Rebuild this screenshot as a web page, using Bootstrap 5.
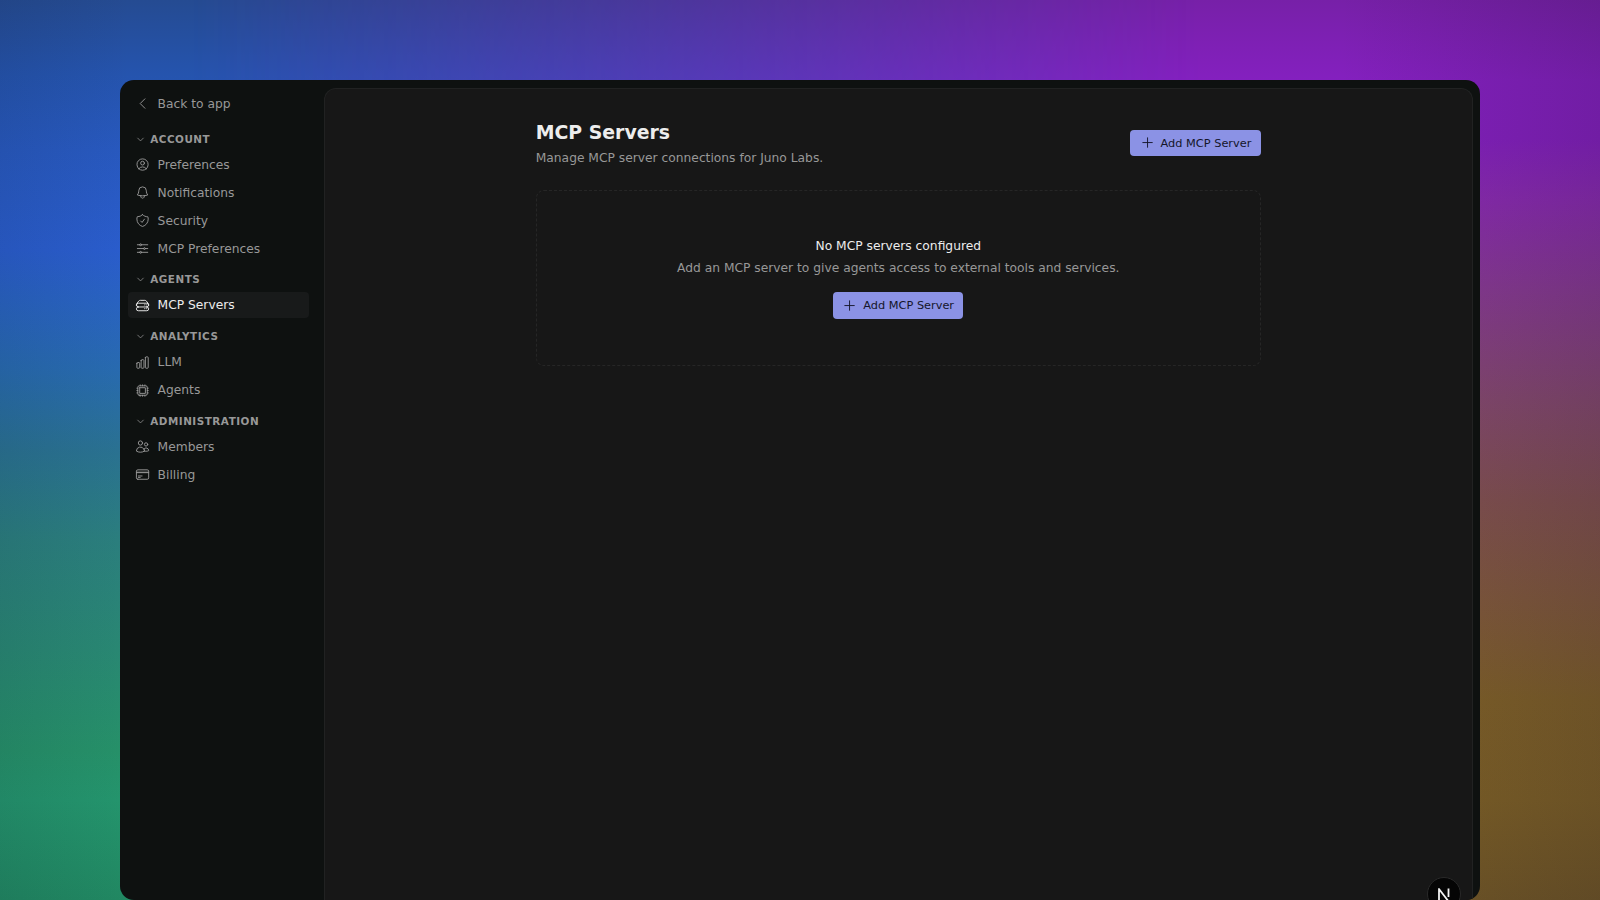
<!DOCTYPE html>
<html lang="en" data-bs-theme="dark">
<head>
<meta charset="utf-8">
<title>MCP Servers</title>
<meta name="viewport" content="width=device-width, initial-scale=1">
<link href="https://cdn.jsdelivr.net/npm/bootstrap@5.3.0/dist/css/bootstrap.min.css" rel="stylesheet">
<style>
  body { font-family: "DejaVu Sans", sans-serif; font-size: 12.28px; line-height: 20px; color: #989898; }
  .desktop {
    height: 900px; padding: 80px 120px 0; z-index: 0;
    background: linear-gradient(180deg, #254b92 0, #2554ae 75px, #2859bf 150px, #2a5dcd 250px, #2963c2 300px, #286bb0 370px, #2a7292 450px, #2b7f7e 540px, #298873 650px, #269169 750px, #24956d 800px, #218862 900px);
  }
  .desktop::before {
    content: ""; position: absolute; inset: 0; z-index: -1;
    background: linear-gradient(180deg, #7720a8 0, #8420bf 80px, #8420be 140px, #8a2bb0 200px, #883a92 290px, #85496e 400px, #825150 500px, #81593c 600px, #7f6028 700px, #7c5f26 800px, #705626 900px);
    -webkit-mask-image: linear-gradient(90deg, transparent 12%, #000 75%); mask-image: linear-gradient(90deg, transparent 12%, #000 75%);
  }
  .desktop::after {
    content: ""; position: absolute; inset: 0; z-index: -1;
    background:
      linear-gradient(90deg, rgba(10,20,40,.1), transparent 130px),
      linear-gradient(270deg, rgba(20,15,35,.17), transparent 260px);
  }
  .app-window { height: 820px; background: #0e1110; border-radius: 14px; padding: 7.5px 7.5px 0 0; }
  .side { width: 204px; padding: 3px 15px 0 7.5px; }
  .side a { display: flex; align-items: center; gap: 7.5px; height: 26px; padding: 0 7.5px; margin-bottom: 2px; border-radius: 4px; color: #989898; text-decoration: none; }
  .side a.active { background: #181a1a; color: #ededed; }
  .side h2 { display: flex; align-items: center; gap: 5px; height: 21px; margin: 7.8px 0 2px; padding-left: 8.7px; font-size: 10.4px; font-weight: 700; letter-spacing: .52px; line-height: 21px; color: #989898; }
  .side .back + h2 { margin-top: 12px; }
  svg { flex: none; width: 15.1px; height: 15.1px; fill: none; stroke: currentColor; stroke-width: 1.5; stroke-linecap: round; stroke-linejoin: round; }
  .side h2 svg { width: 9px; height: 9px; stroke-width: 2; }
  .panel { background: #171717; border: 1px solid #212222; border-bottom: 0; border-radius: 12px 12px 0 0; }
  .content-col { width: 725px; padding-top: 30px; }
  h1 { font-size: 18.88px; line-height: 26px; font-weight: 700; color: #ededed; margin: 0 0 3px; }
  .btn-add { --bs-btn-bg: #8b92e5; --bs-btn-color: #15162a; --bs-btn-hover-bg: #9aa0ee; --bs-btn-border-width: 0; --bs-btn-border-radius: 4px; --bs-btn-font-size: 11.33px; --bs-btn-padding-x: 9.4px; --bs-btn-padding-y: 0; height: 26.5px; gap: 5.7px; line-height: 18px; }
  .empty { height: 176px; margin-top: 22px; border: 1px dashed #262626; border-radius: 8px; padding-top: 45.5px; }
  .empty strong { font-weight: 400; color: #ededed; }
  .empty p { margin: 2px 0 14px; }
  .dev-badge { right: 19.5px; bottom: -11px; width: 34px; height: 34px; background: #050505; border: 1px solid #292929; }
  .dev-badge svg { width: 16px; height: 16px; stroke: #f2f2f2; stroke-width: 1.8; stroke-linecap: butt; }
</style>
</head>
<body>
<div class="desktop position-relative overflow-hidden">
  <div class="app-window d-flex position-relative overflow-hidden">
    <nav class="side flex-shrink-0">
      <a href="#" class="back"><svg viewBox="0 0 24 24"><path d="M15.75 19.5 8.25 12l7.5-7.5"/></svg>Back to app</a>
      <h2><svg viewBox="0 0 24 24"><path d="m19.5 8.25-7.5 7.5-7.5-7.5"/></svg>ACCOUNT</h2>
      <a href="#"><svg viewBox="0 0 24 24"><path d="M17.982 18.725A7.488 7.488 0 0 0 12 15.75a7.488 7.488 0 0 0-5.982 2.975m11.963 0a9 9 0 1 0-11.963 0m11.963 0A8.966 8.966 0 0 1 12 21a8.966 8.966 0 0 1-5.982-2.275M15 9.75a3 3 0 1 1-6 0 3 3 0 0 1 6 0Z"/></svg>Preferences</a>
      <a href="#"><svg viewBox="0 0 24 24"><path d="M14.857 17.082a23.848 23.848 0 0 0 5.454-1.31A8.967 8.967 0 0 1 18 9.75V9A6 6 0 0 0 6 9v.75a8.967 8.967 0 0 1-2.312 6.022c1.733.64 3.56 1.085 5.455 1.31m5.714 0a24.255 24.255 0 0 1-5.714 0m5.714 0a3 3 0 1 1-5.714 0"/></svg>Notifications</a>
      <a href="#"><svg viewBox="0 0 24 24"><path d="M9 12.75 11.25 15 15 9.75m-3-7.036A11.959 11.959 0 0 1 3.598 6 11.99 11.99 0 0 0 3 9.749c0 5.592 3.824 10.29 9 11.623 5.176-1.332 9-6.03 9-11.622 0-1.31-.21-2.571-.598-3.751h-.152c-3.196 0-6.1-1.248-8.25-3.285Z"/></svg>Security</a>
      <a href="#"><svg viewBox="0 0 24 24"><path d="M10.5 6h9.75M10.5 6a1.5 1.5 0 1 1-3 0m3 0a1.5 1.5 0 1 0-3 0M3.75 6H7.5m3 12h9.75m-9.75 0a1.5 1.5 0 0 1-3 0m3 0a1.5 1.5 0 0 0-3 0m-3.75 0H7.5m9-6h3.75m-3.75 0a1.5 1.5 0 0 1-3 0m3 0a1.5 1.5 0 0 0-3 0m-9.75 0h9.75"/></svg>MCP Preferences</a>
      <h2><svg viewBox="0 0 24 24"><path d="m19.5 8.25-7.5 7.5-7.5-7.5"/></svg>AGENTS</h2>
      <a href="#" class="active"><svg viewBox="0 0 24 24"><path d="M5.25 14.25h13.5m-13.5 0a3 3 0 0 1-3-3m3 3a3 3 0 1 0 0 6h13.5a3 3 0 1 0 0-6m-16.5-3a3 3 0 0 1 3-3h13.5a3 3 0 0 1 3 3m-19.5 0a4.5 4.5 0 0 1 .9-2.7L5.737 5.1a3.375 3.375 0 0 1 2.7-1.35h7.126c1.062 0 2.062.5 2.7 1.35l2.587 3.45a4.5 4.5 0 0 1 .9 2.7m0 0a3 3 0 0 1-3 3m0 3h.008v.008h-.008v-.008Zm0-6h.008v.008h-.008v-.008Zm-3 6h.008v.008h-.008v-.008Zm0-6h.008v.008h-.008v-.008Z"/></svg>MCP Servers</a>
      <h2><svg viewBox="0 0 24 24"><path d="m19.5 8.25-7.5 7.5-7.5-7.5"/></svg>ANALYTICS</h2>
      <a href="#"><svg viewBox="0 0 24 24"><path d="M3 13.125C3 12.504 3.504 12 4.125 12h2.25c.621 0 1.125.504 1.125 1.125v6.75C7.5 20.496 6.996 21 6.375 21h-2.25A1.125 1.125 0 0 1 3 19.875v-6.75ZM9.75 8.625c0-.621.504-1.125 1.125-1.125h2.25c.621 0 1.125.504 1.125 1.125v11.25c0 .621-.504 1.125-1.125 1.125h-2.25a1.125 1.125 0 0 1-1.125-1.125V8.625ZM16.5 4.125c0-.621.504-1.125 1.125-1.125h2.25C20.496 3 21 3.504 21 4.125v15.75c0 .621-.504 1.125-1.125 1.125h-2.25a1.125 1.125 0 0 1-1.125-1.125V4.125Z"/></svg>LLM</a>
      <a href="#"><svg viewBox="0 0 24 24"><path d="M8.25 3v1.5M4.5 8.25H3m18 0h-1.5M4.5 12H3m18 0h-1.5m-15 3.75H3m18 0h-1.5M8.25 19.5V21M12 3v1.5m0 15V21m3.75-18v1.5m0 15V21m-9-1.5h10.5a2.25 2.25 0 0 0 2.25-2.25V6.75a2.25 2.25 0 0 0-2.25-2.25H6.75A2.25 2.25 0 0 0 4.5 6.75v10.5a2.25 2.25 0 0 0 2.25 2.25Zm.75-12h9v9h-9v-9Z"/></svg>Agents</a>
      <h2><svg viewBox="0 0 24 24"><path d="m19.5 8.25-7.5 7.5-7.5-7.5"/></svg>ADMINISTRATION</h2>
      <a href="#"><svg viewBox="0 0 24 24"><path d="M15 19.128a9.38 9.38 0 0 0 2.625.372 9.337 9.337 0 0 0 4.121-.952 4.125 4.125 0 0 0-7.533-2.493M15 19.128v-.003c0-1.113-.285-2.16-.786-3.07M15 19.128v.106A12.318 12.318 0 0 1 8.624 21c-2.331 0-4.512-.645-6.374-1.766l-.001-.109a6.375 6.375 0 0 1 11.964-3.07M12 6.375a3.375 3.375 0 1 1-6.75 0 3.375 3.375 0 0 1 6.75 0Zm8.25 2.25a2.625 2.625 0 1 1-5.25 0 2.625 2.625 0 0 1 5.25 0Z"/></svg>Members</a>
      <a href="#"><svg viewBox="0 0 24 24"><path d="M2.25 8.25h19.5M2.25 9h19.5m-16.5 5.25h6m-6 2.25h3m-3.75 3h15a2.25 2.25 0 0 0 2.25-2.25V6.75A2.25 2.25 0 0 0 19.5 4.5h-15a2.25 2.25 0 0 0-2.25 2.25v10.5A2.25 2.25 0 0 0 4.5 19.5Z"/></svg>Billing</a>
    </nav>
    <main class="panel flex-grow-1">
      <div class="content-col mx-auto">
        <header class="d-flex align-items-center justify-content-between">
          <div>
            <h1>MCP Servers</h1>
            <p class="mb-0">Manage MCP server connections for Juno Labs.</p>
          </div>
          <button type="button" class="btn btn-add d-inline-flex align-items-center"><svg viewBox="0 0 24 24"><path d="M12 4.5v15m7.5-7.5h-15"/></svg>Add MCP Server</button>
        </header>
        <section class="empty d-flex flex-column align-items-center">
          <strong>No MCP servers configured</strong>
          <p>Add an MCP server to give agents access to external tools and services.</p>
          <button type="button" class="btn btn-add d-inline-flex align-items-center"><svg viewBox="0 0 24 24"><path d="M12 4.5v15m7.5-7.5h-15"/></svg>Add MCP Server</button>
        </section>
      </div>
    </main>
    <div class="dev-badge position-absolute rounded-circle d-flex align-items-center justify-content-center">
      <svg viewBox="0 0 16 16"><path d="M3 14V3l10 13M12.500 2.500v8.500"/></svg>
    </div>
  </div>
</div>
<script src="https://cdn.jsdelivr.net/npm/bootstrap@5.3.0/dist/js/bootstrap.bundle.min.js"></script>
</body>
</html>
